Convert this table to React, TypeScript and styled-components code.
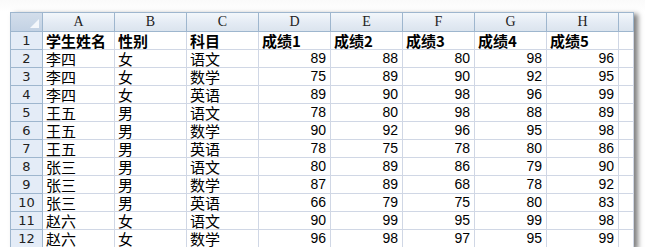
import React from "react";
import styled, { createGlobalStyle } from "styled-components";

const Global = createGlobalStyle`
  html, body { margin: 0; padding: 0; background: #fff; }
  body { width: 645px; height: 247px; overflow: hidden; }
`;

const Page = styled.div`
  padding: 12px 0 0 10px;
  background: linear-gradient(#fafafa, #ffffff 12px);
  height: 247px;
  box-sizing: border-box;
`;

const Sheet = styled.div`
  display: grid;
  grid-template-columns: 32px repeat(8, 72px) 15px;
  grid-auto-rows: 18px;
  grid-template-rows: 19px;
  width: 623px;
  border-top: 1px solid #9eb6ce;
  border-left: 1px solid #9eb6ce;
  box-shadow: 4px 2px 5px rgba(0, 0, 0, 0.5);
  background: #fff;
`;

const Corner = styled.div`
  background: linear-gradient(#d3deeb, #c3d2e4);
  border-right: 1px solid #9eb6ce;
  border-bottom: 1px solid #9eb6ce;
  position: relative;
  &::after {
    content: "";
    position: absolute;
    right: 3px;
    bottom: 3px;
    width: 0;
    height: 0;
    border-left: 9px solid transparent;
    border-bottom: 9px solid #f4f7fb;
  }
`;

const ColHead = styled.div`
  background: linear-gradient(#f3f7fb, #e4ebf4 55%, #dbe4ee);
  border-right: 1px solid #9eb6ce;
  border-bottom: 1px solid #9eb6ce;
  font-family: "Liberation Serif", "DejaVu Serif", serif;
  font-size: 14px;
  color: #222;
  text-align: center;
  line-height: 18px;
`;

const RowHead = styled.div`
  background: #e4ecf7;
  border-right: 1px solid #9eb6ce;
  border-bottom: 1px solid #9eb6ce;
  font-family: "DejaVu Sans", "Liberation Sans", sans-serif;
  font-size: 13px;
  color: #222;
  text-align: center;
  line-height: 17px;
`;

const Cell = styled.div<{ $num?: boolean; $bold?: boolean }>`
  border-right: 1px solid #d0d7e5;
  border-bottom: 1px solid #d0d7e5;
  font-family: ${(p) =>
    p.$num && !p.$bold
      ? `"Liberation Sans", Arial, sans-serif`
      : `"Noto Sans CJK SC", "Liberation Sans", sans-serif`};
  font-size: ${(p) => (p.$num && !p.$bold ? "14px" : "15px")};
  font-weight: ${(p) => (p.$bold ? 700 : 400)};
  color: #000;
  text-align: ${(p) => (p.$num ? "right" : "left")};
  padding: 0 ${(p) => (p.$num ? "4px" : "0")} 0 ${(p) => (p.$num ? "0" : "3px")};
  line-height: 17px;
  white-space: nowrap;
`;

const header = ["学生姓名", "性别", "科目", "成绩1", "成绩2", "成绩3", "成绩4", "成绩5"];
const rows: (string | number)[][] = [
  ["李四", "女", "语文", 89, 88, 80, 98, 96],
  ["李四", "女", "数学", 75, 89, 90, 92, 95],
  ["李四", "女", "英语", 89, 90, 98, 96, 99],
  ["王五", "男", "语文", 78, 80, 98, 88, 89],
  ["王五", "男", "数学", 90, 92, 96, 95, 98],
  ["王五", "男", "英语", 78, 75, 78, 80, 86],
  ["张三", "男", "语文", 80, 89, 86, 79, 90],
  ["张三", "男", "数学", 87, 89, 68, 78, 92],
  ["张三", "男", "英语", 66, 79, 75, 80, 83],
  ["赵六", "女", "语文", 90, 99, 95, 99, 98],
  ["赵六", "女", "数学", 96, 98, 97, 95, 99],
];
const letters = ["A", "B", "C", "D", "E", "F", "G", "H", ""];

export default function App() {
  return (
    <>
      <Global />
      <Page>
        <Sheet>
          <Corner />
          {letters.map((l, i) => (
            <ColHead key={i}>{l}</ColHead>
          ))}
          <RowHead>1</RowHead>
          {header.map((h, i) => (
            <Cell key={i} $bold>
              {h}
            </Cell>
          ))}
          <Cell />
          {rows.map((r, ri) => (
            <React.Fragment key={ri}>
              <RowHead>{ri + 2}</RowHead>
              {r.map((v, ci) => (
                <Cell key={ci} $num={typeof v === "number"}>
                  {v}
                </Cell>
              ))}
              <Cell />
            </React.Fragment>
          ))}
        </Sheet>
      </Page>
    </>
  );
}
